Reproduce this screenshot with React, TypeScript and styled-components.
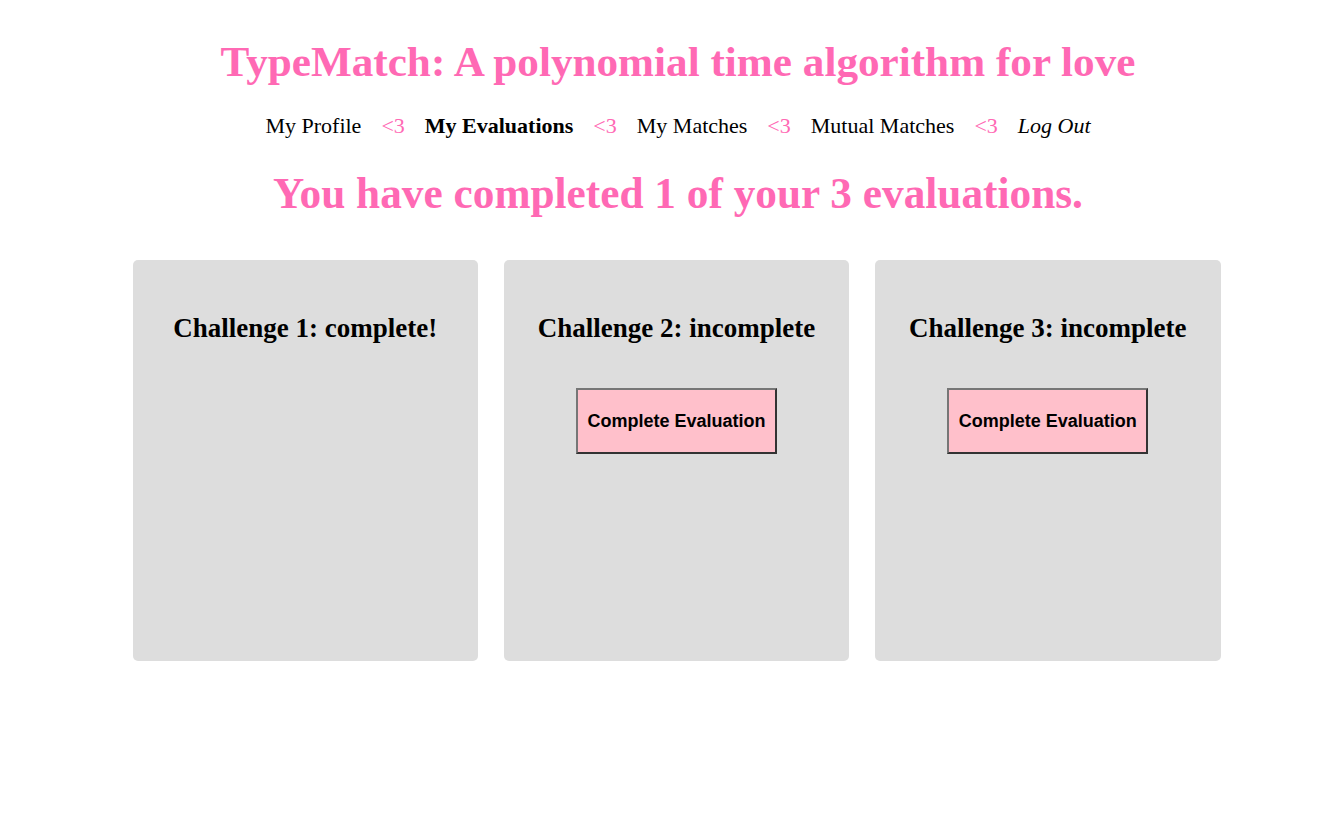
import React from "react";
import styled, { createGlobalStyle } from "styled-components";

const Global = createGlobalStyle`
  body {
    margin: 8px;
    background: #ffffff;
    font-family: "Liberation Serif", "Times New Roman", serif;
  }
`;

const Page = styled.div`
  display: flex;
  flex-direction: column;
  align-items: center;
  padding-left: 32px;
`;

const Title = styled.h1`
  color: hotpink;
  font-size: 43.2px;
  font-weight: bold;
  margin: 29px 0 0;
  line-height: 50px;
  text-align: center;
`;

const Nav = styled.nav`
  display: flex;
  align-items: center;
  gap: 20px;
  margin-top: 26px;
  font-size: 22px;
  line-height: 26px;
`;

const NavLink = styled.span<{ $active?: boolean; $italic?: boolean }>`
  color: #000;
  font-weight: ${(p) => (p.$active ? "bold" : "normal")};
  font-style: ${(p) => (p.$italic ? "italic" : "normal")};
`;

const Heart = styled.span`
  color: hotpink;
`;

const Subtitle = styled.h2`
  color: hotpink;
  font-size: 43.3px;
  font-weight: bold;
  margin: 29px 0 0;
  line-height: 50px;
  text-align: center;
`;

const Cards = styled.div`
  display: grid;
  width: 1088px;
  grid-template-columns: repeat(3, 1fr);
  column-gap: 26px;
  margin-top: 42px;
  margin-right: 3px;
`;

const Card = styled.div`
  background: #dddddd;
  border-radius: 5px;
  height: 401px;
  display: flex;
  flex-direction: column;
  align-items: center;
  padding-top: 52px;
  box-sizing: border-box;
`;

const CardTitle = styled.h3`
  font-size: 27px;
  font-weight: bold;
  margin: 0;
  line-height: 32px;
`;

const Button = styled.button`
  margin-top: 44px;
  width: 201px;
  height: 66px;
  padding: 0;
  background: pink;
  border-style: solid;
  border-width: 2px;
  border-color: #767676 #333 #333 #767676;
  font-family: "Liberation Sans", Arial, sans-serif;
  font-weight: bold;
  font-size: 18px;
  color: #000;
`;

const navItems = ["My Profile", "My Evaluations", "My Matches", "Mutual Matches"];

const challenges = [
  { n: 1, done: true },
  { n: 2, done: false },
  { n: 3, done: false },
];

export default function App() {
  return (
    <>
      <Global />
      <Page>
        <Title>TypeMatch: A polynomial time algorithm for love</Title>
        <Nav>
          {navItems.map((item) => (
            <React.Fragment key={item}>
              <NavLink $active={item === "My Evaluations"}>{item}</NavLink>
              <Heart>&lt;3</Heart>
            </React.Fragment>
          ))}
          <NavLink $italic>Log Out</NavLink>
        </Nav>
        <Subtitle>You have completed 1 of your 3 evaluations.</Subtitle>
        <Cards>
          {challenges.map((c) => (
            <Card key={c.n}>
              <CardTitle>
                Challenge {c.n}: {c.done ? "complete!" : "incomplete"}
              </CardTitle>
              {!c.done && <Button>Complete Evaluation</Button>}
            </Card>
          ))}
        </Cards>
      </Page>
    </>
  );
}
